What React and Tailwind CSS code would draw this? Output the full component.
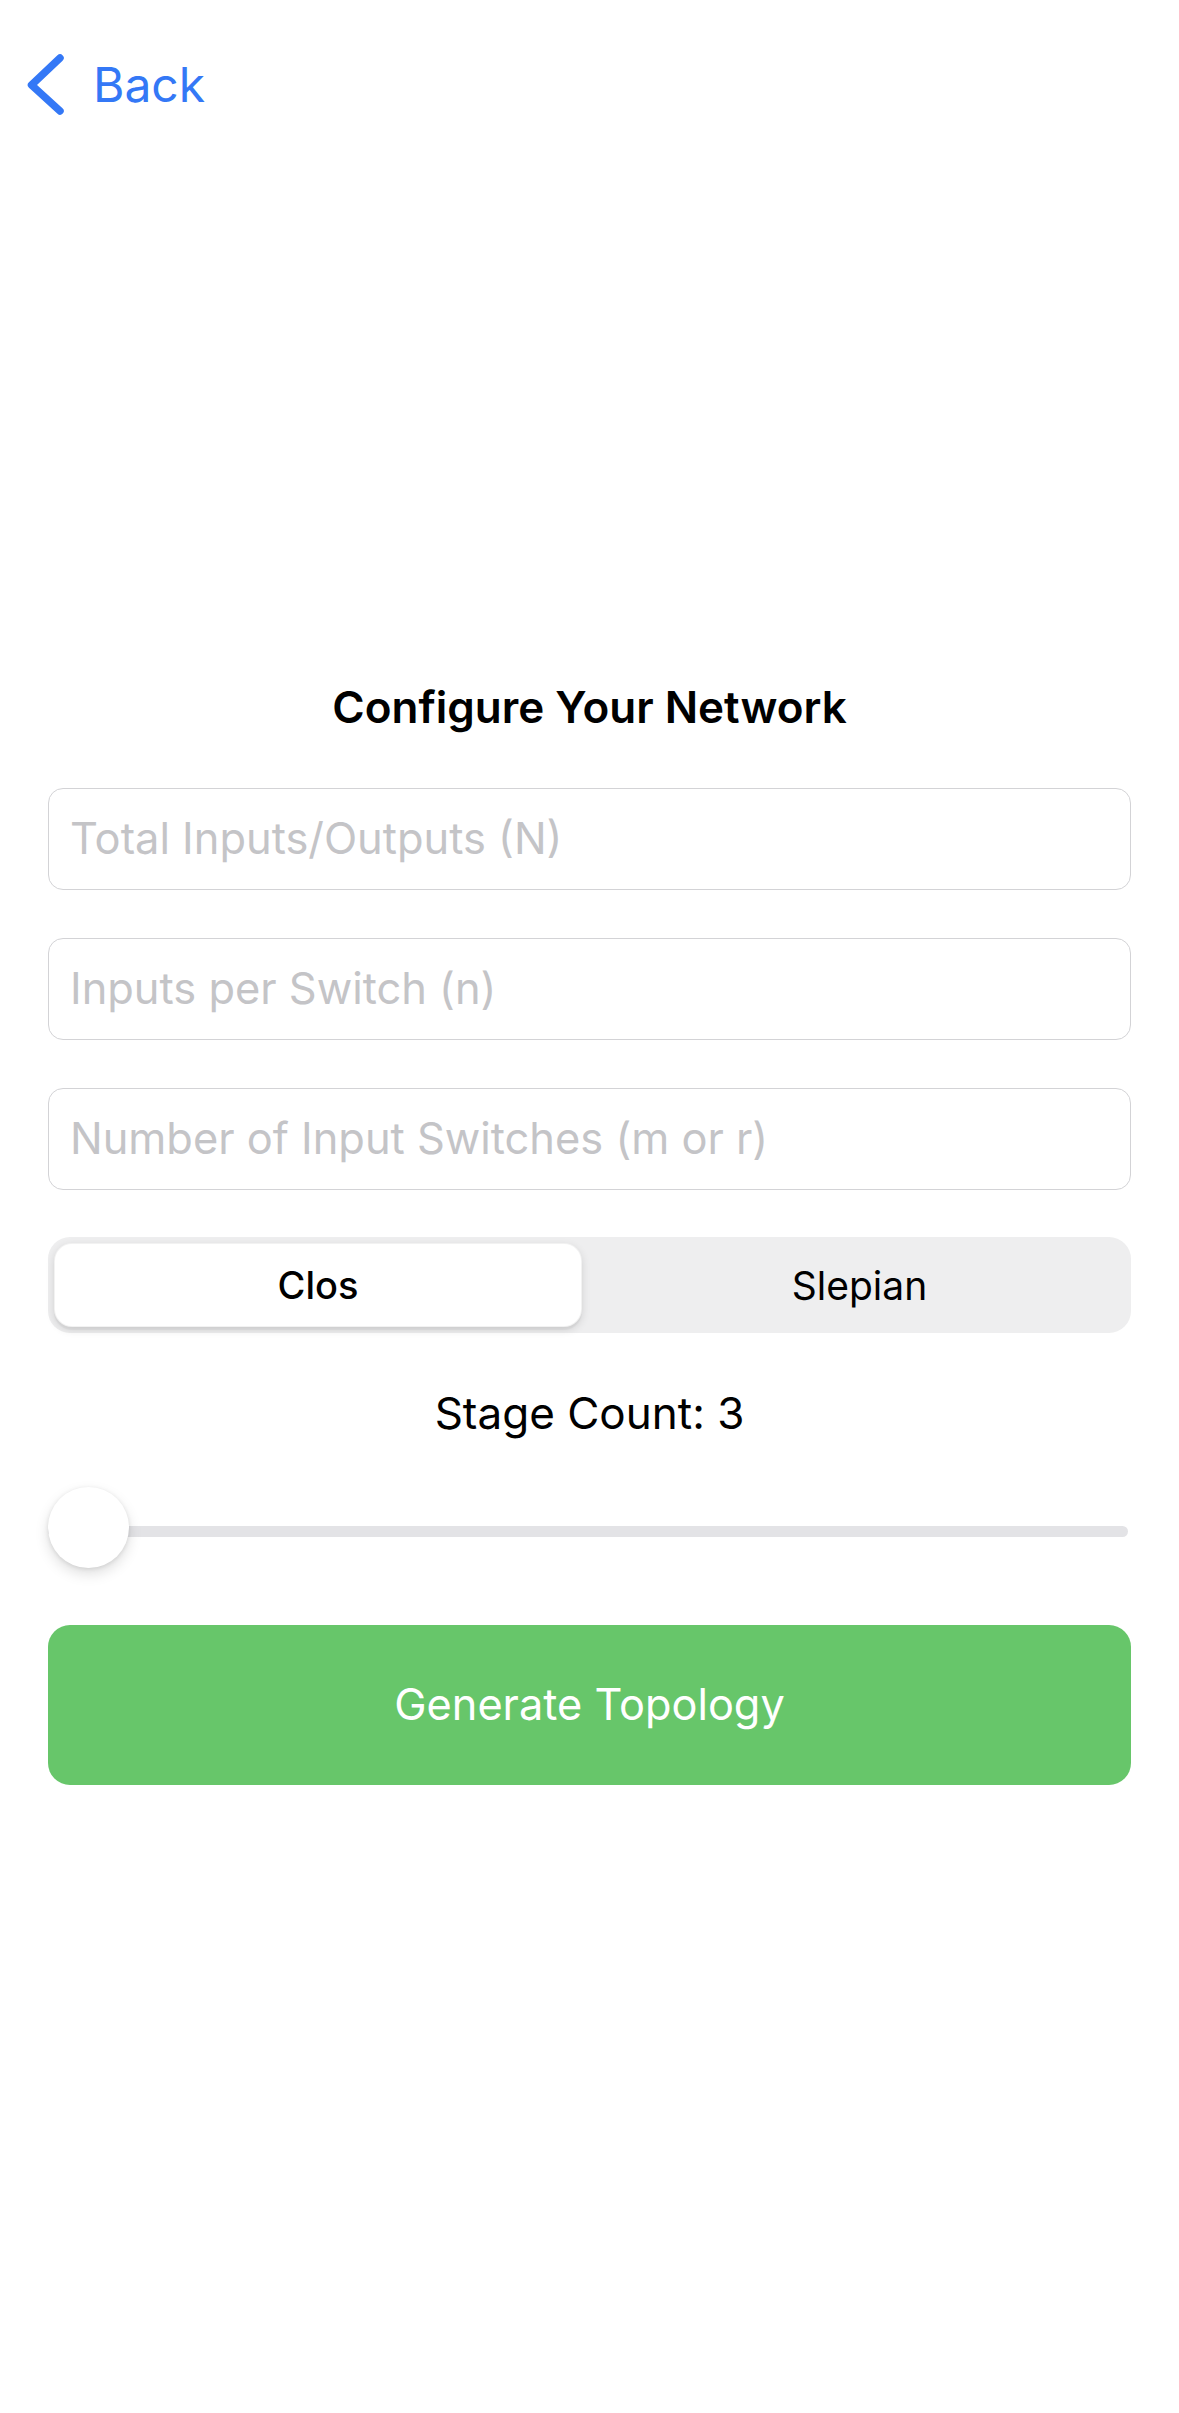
import React from "react";

export default function App() {
  const font = { fontFamily: "Inter, 'Noto Sans', 'Liberation Sans', sans-serif" };
  return (
    <div className="w-[1179px] h-[2413px] bg-white relative overflow-hidden" style={font}>
      <div className="pt-[54px] pl-[25px] flex items-center">
        <svg width="40" height="62" viewBox="0 0 40 62" fill="none">
          <path d="M35 4 L6.5 31 L35 57" stroke="#3478f6" strokeWidth="7.5" strokeLinecap="round" strokeLinejoin="round" />
        </svg>
        <span className="ml-[28px] text-[48px] leading-none text-[#3478f6]">Back</span>
      </div>

      <div className="mt-[569px] px-[48px] flex flex-col">
        <h1 className="text-[44px] leading-none font-semibold text-black text-center">Configure Your Network</h1>

        <div className="mt-[59px] flex flex-col gap-[48px]">
          {["Total Inputs/Outputs (N)", "Inputs per Switch (n)", "Number of Input Switches (m or r)"].map((p) => (
            <div key={p} className="h-[102px] border-[1.5px] border-[#d3d3d6] rounded-[15px] flex items-center px-[21px]">
              <span className="text-[43.4px] leading-none text-[#c4c4c7]">{p}</span>
            </div>
          ))}
        </div>

        <div className="mt-[47px] h-[96px] bg-[#eeeeef] rounded-[22px] p-[6px] flex">
          <div className="w-[528px] bg-white rounded-[18px] flex items-center justify-center shadow-[0_3px_8px_rgba(0,0,0,0.12),0_3px_1px_rgba(0,0,0,0.04)] border-[1px] border-black/5">
            <span className="text-[38px] leading-none font-medium text-black">Clos</span>
          </div>
          <div className="flex-1 flex items-center justify-center pl-[12px]">
            <span className="text-[39px] leading-none text-black">Slepian</span>
          </div>
        </div>

        <div className="mt-[58px] text-center text-[44px] leading-none text-black">Stage Count: 3</div>

        <div className="mt-[51px] h-[84px] relative flex items-center">
          <div className="w-full h-[11px] bg-[#e3e3e6] rounded-full mt-[7px] mr-[3px]"></div>
          <div className="absolute left-0 top-[1px] w-[81px] h-[81px] rounded-full bg-white shadow-[0_6px_14px_rgba(0,0,0,0.13),0_1px_4px_rgba(0,0,0,0.10)]"></div>
        </div>

        <button className="mt-[55px] h-[160px] w-full rounded-[22px] bg-[#67c66a] flex items-center justify-center">
          <span className="text-[43.3px] leading-none text-white">Generate Topology</span>
        </button>
      </div>
    </div>
  );
}
